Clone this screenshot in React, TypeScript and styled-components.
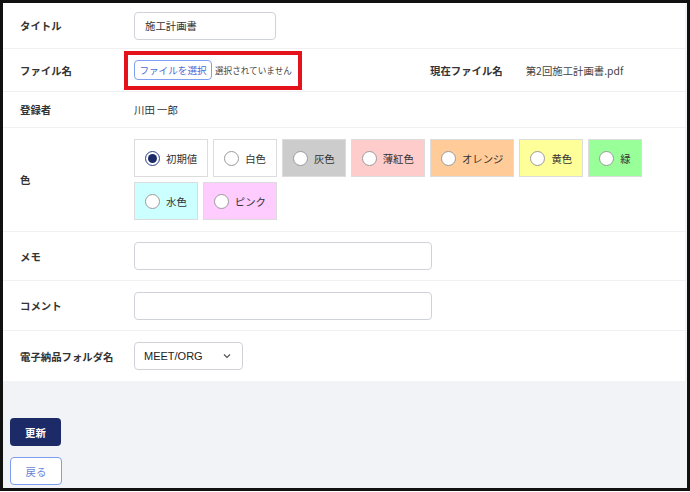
import styled, { createGlobalStyle } from "styled-components";

const GlobalStyle = createGlobalStyle`
	html, body {
		margin: 0;
		padding: 0;
		background: #ffffff;
	}
	* {
		box-sizing: border-box;
	}
	body {
		font-family: "Noto Sans CJK JP", "Noto Sans", sans-serif;
		color: #333;
	}
`;

type ColorOption = { label: string; bg: string; checked?: boolean };

const colorOptions: ColorOption[] = [
	{ label: "初期値", bg: "#ffffff", checked: true },
	{ label: "白色", bg: "#ffffff" },
	{ label: "灰色", bg: "#cccccc" },
	{ label: "薄紅色", bg: "#ffcccc" },
	{ label: "オレンジ", bg: "#ffcc99" },
	{ label: "黄色", bg: "#ffff99" },
	{ label: "緑", bg: "#99ff99" },
	{ label: "水色", bg: "#ccffff" },
	{ label: "ピンク", bg: "#ffccff" },
];

const App: React.FC = () => {
	return (
		<>
			<GlobalStyle />
			<Frame>
				<Card>
					<Row $h={46}>
						<Label>タイトル</Label>
						<TextInput $w={142} defaultValue="施工計画書" />
					</Row>
					<Row $h={43}>
						<Label>ファイル名</Label>
						<FileCell>
							<FileGroup>
								<Highlight />
								<FileButton>ファイルを選択</FileButton>
								<FileNote>選択されていません</FileNote>
							</FileGroup>
							<CurrentFile>
								<CurrentLabel>現在ファイル名</CurrentLabel>
								<CurrentValue>第2回施工計画書.pdf</CurrentValue>
							</CurrentFile>
						</FileCell>
					</Row>
					<Row $h={36}>
						<Label>登録者</Label>
						<Value>川田 一郎</Value>
					</Row>
					<Row $h={104}>
						<Label>色</Label>
						<ColorGrid>
							{colorOptions.map((c) => (
								<ColorBox key={c.label} $bg={c.bg}>
									<Radio $checked={!!c.checked} />
									<span>{c.label}</span>
								</ColorBox>
							))}
						</ColorGrid>
					</Row>
					<Row $h={49}>
						<Label>メモ</Label>
						<TextInput $w={298} />
					</Row>
					<Row $h={50}>
						<Label>コメント</Label>
						<TextInput $w={298} />
					</Row>
					<Row $h={50} $last>
						<Label>電子納品フォルダ名</Label>
						<Select>
							<span>MEET/ORG</span>
							<svg width="10" height="10" viewBox="0 0 10 10">
								<path d="M2 3.5 L5 6.5 L8 3.5" fill="none" stroke="#555" strokeWidth="1.2" />
							</svg>
						</Select>
					</Row>
				</Card>
				<Footer>
					<PrimaryButton>更新</PrimaryButton>
					<BackButton>戻る</BackButton>
				</Footer>
			</Frame>
		</>
	);
};

export default App;

const Frame = styled.div`
	height: 491px;
	border: 3px solid #111;
	background: #f2f3f7;
	padding-right: 2px;
	display: flex;
	flex-direction: column;
`;

const Card = styled.div`
	background: #ffffff;
`;

const Row = styled.div<{ $h: number; $last?: boolean }>`
	display: grid;
	grid-template-columns: 114px 1fr;
	align-items: center;
	min-height: ${(p) => p.$h}px;
	padding-left: 17px;
	border-bottom: ${(p) => (p.$last ? "none" : "1px solid #f0f0f3")};
`;

const Label = styled.div`
	font-size: 10.4px;
	font-weight: 700;
	color: #333;
`;

const Value = styled.div`
	font-size: 10.4px;
	color: #333;
`;

const TextInput = styled.input<{ $w: number }>`
	width: ${(p) => p.$w}px;
	height: 28px;
	border: 1px solid #cfd2d8;
	border-radius: 4px;
	padding: 0 10px;
	font-family: inherit;
	font-size: 10.4px;
	color: #333;
	outline: none;
`;

const FileCell = styled.div`
	display: flex;
	align-items: center;
`;

const FileGroup = styled.div`
	position: relative;
	display: flex;
	align-items: center;
	gap: 3px;
	width: 296px;
`;

const Highlight = styled.div`
	position: absolute;
	left: -10px;
	top: -9px;
	width: 178px;
	height: 39px;
	border: 4px solid #e3121b;
	pointer-events: none;
`;

const FileButton = styled.button`
	height: 20px;
	width: 78px;
	padding: 0;
	border: 1px solid #7e9ef2;
	border-radius: 4px;
	background: #ffffff;
	color: #4a6ad6;
	font-family: inherit;
	font-size: 9.6px;
`;

const FileNote = styled.span`
	font-size: 8.6px;
	color: #444;
`;

const CurrentFile = styled.div`
	display: flex;
	align-items: center;
	gap: 23px;
	font-size: 10.4px;
`;

const CurrentLabel = styled.span`
	font-weight: 700;
	color: #333;
`;

const CurrentValue = styled.span`
	color: #444;
`;

const ColorGrid = styled.div`
	display: flex;
	flex-wrap: wrap;
	gap: 5px;
	max-width: 514px;
`;

const ColorBox = styled.label<{ $bg: string }>`
	display: flex;
	align-items: center;
	gap: 6px;
	height: 38px;
	padding: 0 10px;
	background: ${(p) => p.$bg};
	border: 1px solid #dcdcdc;
	font-size: 10.4px;
	color: #333;
`;

const Radio = styled.span<{ $checked: boolean }>`
	width: 15px;
	height: 15px;
	border-radius: 50%;
	background: #ffffff;
	border: 1px solid ${(p) => (p.$checked ? "#2c3f8c" : "#9a9a9a")};
	display: flex;
	align-items: center;
	justify-content: center;
	&::after {
		content: "";
		width: 9px;
		height: 9px;
		border-radius: 50%;
		background: ${(p) => (p.$checked ? "#1c2b68" : "transparent")};
	}
`;

const Select = styled.div`
	width: 109px;
	height: 28px;
	border: 1px solid #cfd2d8;
	border-radius: 4px;
	background: #ffffff;
	display: flex;
	align-items: center;
	justify-content: space-between;
	padding: 0 10px 0 9px;
	font-family: "Liberation Sans", Arial, sans-serif;
	font-size: 11px;
	color: #222;
`;

const Footer = styled.div`
	display: flex;
	flex-direction: column;
	align-items: flex-start;
	gap: 11px;
	padding: 37px 0 0 7px;
`;

const PrimaryButton = styled.button`
	width: 51px;
	height: 28px;
	border: none;
	border-radius: 4px;
	background: #1c2b68;
	color: #ffffff;
	font-family: inherit;
	font-weight: 700;
	font-size: 10.4px;
`;

const BackButton = styled.button`
	width: 52px;
	height: 28px;
	border: 1px solid #7e9ef2;
	border-radius: 4px;
	background: #ffffff;
	color: #6a85d6;
	font-family: inherit;
	font-size: 10.4px;
`;
